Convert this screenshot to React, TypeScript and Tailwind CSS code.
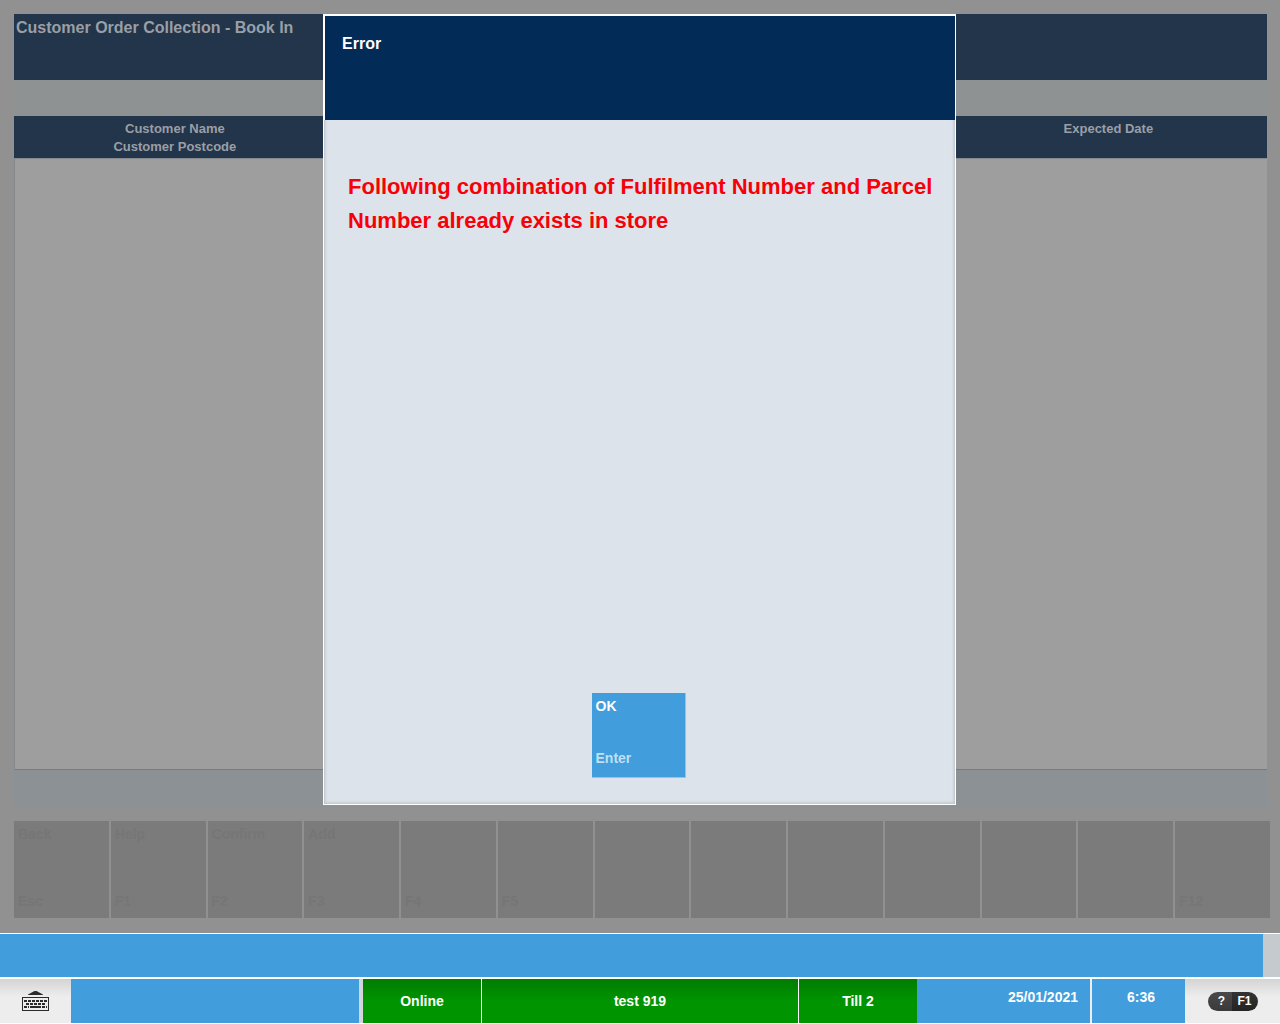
const functionKeys = [
  { label: "Back", hint: "Esc" },
  { label: "Help", hint: "F1" },
  { label: "Confirm", hint: "F2" },
  { label: "Add", hint: "F3" },
  { label: "", hint: "F4" },
  { label: "", hint: "F5" },
  { label: "", hint: "" },
  { label: "", hint: "" },
  { label: "", hint: "" },
  { label: "", hint: "" },
  { label: "", hint: "" },
  { label: "", hint: "" },
  { label: "", hint: "F12" },
];

function KeyboardIcon() {
  return (
    <svg width="27" height="20" viewBox="0 0 27 20" fill="#2b2b2b" aria-hidden="true">
      <path d="M12.500 0H14.500L21 3.500V4H6V3.500Z" />
      <rect x="0.5" y="6.5" width="26" height="13" fill="none" stroke="#2b2b2b" />
      <path
        d="M2 10H25M4 13H23M2 16H7M8 16H19M20 16H25"
        stroke="#2b2b2b"
        strokeWidth="2"
        strokeDasharray="3 1"
      />
      <path d="M8 16H19" stroke="#2b2b2b" strokeWidth="2" />
    </svg>
  );
}

function ErrorDialog() {
  return (
    <div className="absolute inset-0 flex justify-center pt-3.5 pr-px pb-32">
      <div
        role="dialog"
        aria-modal="true"
        aria-labelledby="error-title"
        className="flex w-[633px] flex-col border border-white bg-[#dce3ea] shadow-[inset_0_0_3px_1px_#b9bfc4]"
      >
        <header className="h-[105px] border-t border-l border-white bg-[#022b58] px-[17px] pt-[18px]">
          <h2 id="error-title" className="text-[16px] leading-5 font-bold text-white">
            Error
          </h2>
        </header>
        <p className="pt-[50px] pr-4 pl-6 text-[22px] leading-[34px] font-bold text-[#f80008]">
          Following combination of Fulfilment Number and Parcel Number already exists in store
        </p>
        <button
          type="button"
          className="mt-auto mr-0.5 mb-[26px] flex h-[85px] w-[94px] flex-col justify-between self-center border-r border-b border-[#8fc3e8] bg-[#419ddb] px-1 pt-1 pb-2.5 text-left text-[14px] leading-[18px] font-bold text-white"
        >
          <span>OK</span>
          <span className="text-[#bfdff4]">Enter</span>
        </button>
      </div>
    </div>
  );
}

function BookInScreen() {
  return (
    <div className="flex grow flex-col pt-3.5 pr-[13px] pl-3.5">
      <header className="h-[66px] bg-[#22354b] px-0.5 pt-1">
        <h1 className="text-[16px] leading-5 font-bold text-[#9a9fa5]">
          Customer Order Collection - Book In
        </h1>
      </header>
      <div className="h-9 bg-[#8f9293]" />
      <table className="w-full table-fixed border-collapse text-[13px] leading-[18px] text-[#9a9fa5]">
        <thead>
          <tr className="h-[42px] bg-[#22354b] align-top">
            <th scope="col" className="w-[26%] pt-1 pr-1 pb-0 font-bold">
              Customer Name
              <br />
              Customer Postcode
            </th>
            <td className="w-[49%]" />
            <th scope="col" className="pt-1 pr-1 pb-0 font-bold">
              Expected Date
            </th>
          </tr>
        </thead>
      </table>
      <div className="grow border border-r-0 border-t-[#848a90] border-b-[#757c82] border-l-[#84878a] bg-[#9e9e9e]" />
      <div className="h-[38px] bg-[#8b9194]" />
    </div>
  );
}

function FunctionKeyBar() {
  return (
    <nav
      aria-label="Function keys"
      className="grid grid-cols-13 gap-0.5 pt-[13px] pr-2.5 pb-[15px] pl-3.5"
    >
      {functionKeys.map((key, index) => (
        <button
          key={index}
          type="button"
          disabled
          className="flex h-[97px] flex-col justify-between bg-[#7b7b7b] px-1 pt-1 pb-2 text-left text-[14px] leading-[18px] font-bold text-[#767676]"
        >
          <span>{key.label}</span>
          <span>{key.hint}</span>
        </button>
      ))}
    </nav>
  );
}

function StatusBar() {
  return (
    <footer className="flex h-[46px] items-stretch border-t border-b border-white bg-[#ededed] text-[14px] leading-5 font-bold text-white">
      <button
        type="button"
        aria-label="On-screen keyboard"
        className="flex w-[71px] items-center justify-center bg-linear-to-b from-[#d4d4d4] via-[#ededed] via-40% to-[#ededed]"
      >
        <KeyboardIcon />
      </button>
      <div className="grow bg-[#419ddb]" />
      <div className="w-1 bg-[#d3d6d9]" />
      <div className="flex w-[554px] divide-x divide-white bg-linear-to-b from-[#007d00] to-[#009400] to-50%">
        <div className="flex w-[119px] items-center justify-center">Online</div>
        <div className="flex grow items-center justify-center">test 919</div>
        <div className="flex w-[118px] items-center justify-center">Till 2</div>
      </div>
      <div className="w-[173px] bg-[#419ddb] pt-2 pr-3 text-right">25/01/2021</div>
      <div className="ml-0.5 w-[93px] bg-[#419ddb] pt-2 pr-[30px] text-right">6:36</div>
      <div className="flex w-[95px] items-center justify-center bg-linear-to-b from-[#d4d4d4] via-[#ededed] via-40% to-[#ededed]">
        <button
          type="button"
          aria-label="Help F1"
          className="flex h-[19px] w-[50px] items-center overflow-hidden rounded-full text-[12px] leading-[19px]"
        >
          <span className="w-6 bg-linear-to-b from-[#4a4a4a] to-[#3a3a3a] pl-1">?</span>
          <span className="grow bg-linear-to-b from-[#333333] to-[#242424]">F1</span>
        </button>
      </div>
    </footer>
  );
}

export default function App() {
  return (
    <div className="flex min-h-screen flex-col bg-[#919191] font-['Liberation_Sans',Arial,sans-serif]">
      <main className="relative flex grow flex-col">
        <BookInScreen />
        <FunctionKeyBar />
        <ErrorDialog />
      </main>
      <div className="h-[45px] border-t border-b border-white bg-[#c5cacf] pr-[17px]">
        <div className="h-full bg-[#419ddb]" />
      </div>
      <StatusBar />
    </div>
  );
}
